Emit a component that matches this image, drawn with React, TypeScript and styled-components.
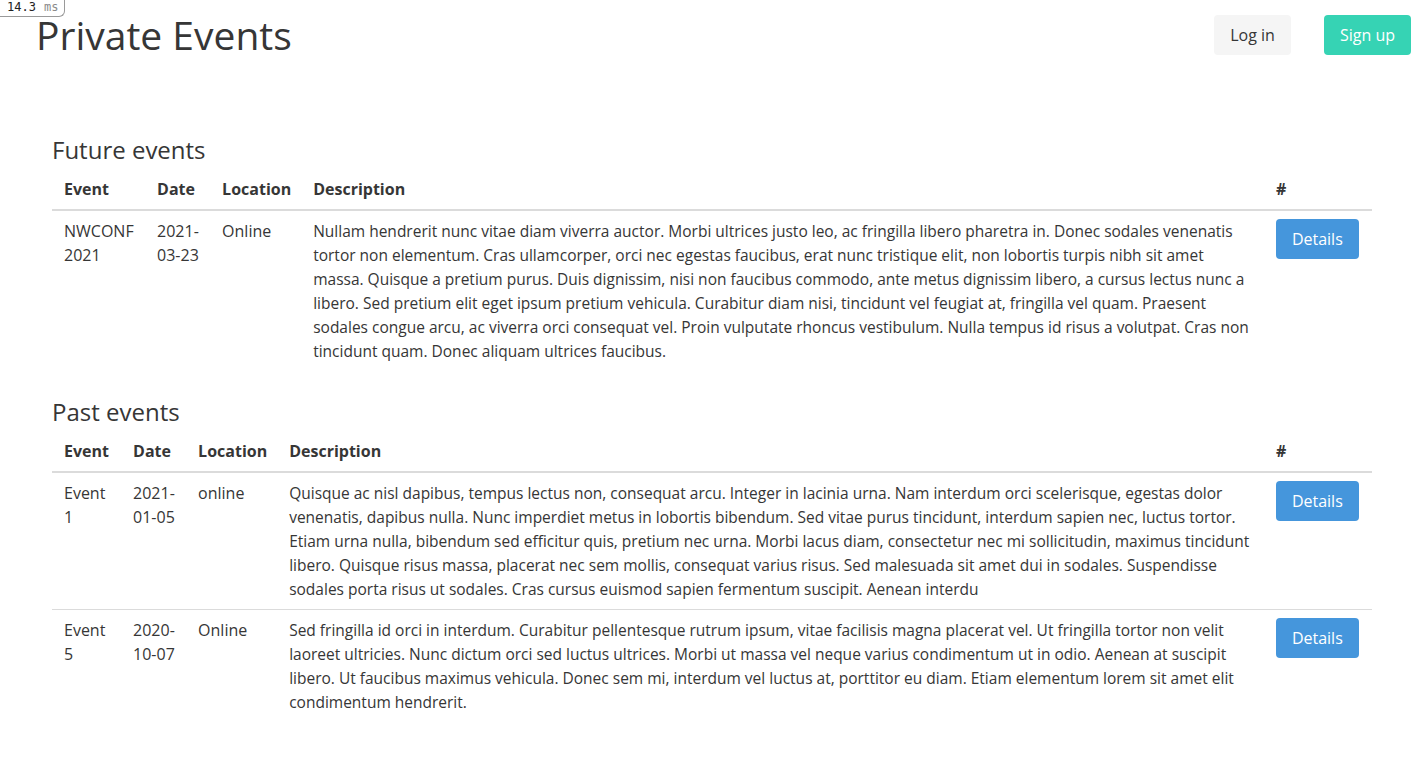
import React from 'react';
import styled, { createGlobalStyle } from 'styled-components';

interface EventRow {
  name: string[];
  date: string[];
  location: string;
  description: string[];
}

const futureEvents: EventRow[] = [
  {
    name: ['NWCONF', '2021'],
    date: ['2021-', '03-23'],
    location: 'Online',
    description: [
      'Nullam hendrerit nunc vitae diam viverra auctor. Morbi ultrices justo leo, ac fringilla libero pharetra in. Donec sodales venenatis',
      'tortor non elementum. Cras ullamcorper, orci nec egestas faucibus, erat nunc tristique elit, non lobortis turpis nibh sit amet',
      'massa. Quisque a pretium purus. Duis dignissim, nisi non faucibus commodo, ante metus dignissim libero, a cursus lectus nunc a',
      'libero. Sed pretium elit eget ipsum pretium vehicula. Curabitur diam nisi, tincidunt vel feugiat at, fringilla vel quam. Praesent',
      'sodales congue arcu, ac viverra orci consequat vel. Proin vulputate rhoncus vestibulum. Nulla tempus id risus a volutpat. Cras non',
      'tincidunt quam. Donec aliquam ultrices faucibus.',
    ],
  },
];

const pastEvents: EventRow[] = [
  {
    name: ['Event', '1'],
    date: ['2021-', '01-05'],
    location: 'online',
    description: [
      'Quisque ac nisl dapibus, tempus lectus non, consequat arcu. Integer in lacinia urna. Nam interdum orci scelerisque, egestas dolor',
      'venenatis, dapibus nulla. Nunc imperdiet metus in lobortis bibendum. Sed vitae purus tincidunt, interdum sapien nec, luctus tortor.',
      'Etiam urna nulla, bibendum sed efficitur quis, pretium nec urna. Morbi lacus diam, consectetur nec mi sollicitudin, maximus tincidunt',
      'libero. Quisque risus massa, placerat nec sem mollis, consequat varius risus. Sed malesuada sit amet dui in sodales. Suspendisse',
      'sodales porta risus ut sodales. Cras cursus euismod sapien fermentum suscipit. Aenean interdu',
    ],
  },
  {
    name: ['Event', '5'],
    date: ['2020-', '10-07'],
    location: 'Online',
    description: [
      'Sed fringilla id orci in interdum. Curabitur pellentesque rutrum ipsum, vitae facilisis magna placerat vel. Ut fringilla tortor non velit',
      'laoreet ultricies. Nunc dictum orci sed luctus ultrices. Morbi ut massa vel neque varius condimentum ut in odio. Aenean at suscipit',
      'libero. Ut faucibus maximus vehicula. Donec sem mi, interdum vel luctus at, porttitor eu diam. Etiam elementum lorem sit amet elit',
      'condimentum hendrerit.',
    ],
  },
];

const Lines = ({ lines, small }: { lines: string[]; small?: boolean }) => (
  <>
    {lines.map((l, i) => (
      <Line key={i} small={small}>{l}</Line>
    ))}
  </>
);

const EventsTable = ({ title, events, widths }: { title: string; events: EventRow[]; widths: number[] }) => (
  <Section>
    <SectionTitle>{title}</SectionTitle>
    <Table>
      <colgroup>
        {widths.map((w, i) => (
          <Col key={i} width={w} />
        ))}
      </colgroup>
      <thead>
        <tr>
          <Th>Event</Th>
          <Th>Date</Th>
          <Th>Location</Th>
          <Th>Description</Th>
          <Th>#</Th>
        </tr>
      </thead>
      <tbody>
        {events.map((e, i) => (
          <Tr key={i}>
            <Td><Lines lines={e.name} /></Td>
            <Td><Lines lines={e.date} /></Td>
            <Td>{e.location}</Td>
            <Td><Lines lines={e.description} small /></Td>
            <Td><Button variant="info">Details</Button></Td>
          </Tr>
        ))}
      </tbody>
    </Table>
  </Section>
);

const App = () => (
  <>
    <GlobalStyle />
    <Badge>
      <Timing>14.3</Timing>
      <Unit>ms</Unit>
    </Badge>
    <Navbar>
      <Brand>Private Events</Brand>
      <NavButtons>
        <Button variant="light">Log in</Button>
        <Button variant="primary">Sign up</Button>
      </NavButtons>
    </Navbar>
    <Main>
      <EventsTable title="Future events" events={futureEvents} widths={[93, 65, 91, 962, 108]} />
      <EventsTable title="Past events" events={pastEvents} widths={[69, 65, 91, 986, 108]} />
    </Main>
  </>
);

const GlobalStyle = createGlobalStyle`
  body {
    margin: 0;
    background: #fff;
    color: #4a4a4a;
    font-family: "Open Sans", "Noto Sans", sans-serif;
    font-size: 16px;
    line-height: 1.5;
  }
`;

const Badge = styled.div`
  position: absolute;
  top: 0;
  left: 0;
  z-index: 2;
  display: flex;
  gap: 8px;
  height: 16px;
  padding: 0 6px 0 7px;
  background: #fff;
  border-right: 1px solid #9a9a9a;
  border-bottom: 1px solid #9a9a9a;
  border-radius: 0 0 6px 0;
  font-family: "DejaVu Sans Mono", "Liberation Mono", monospace;
  font-size: 12px;
  line-height: 14px;
`;

const Timing = styled.span`
  color: #222;
`;

const Unit = styled.span`
  color: #8a8a8a;
`;

const Navbar = styled.header`
  display: flex;
  align-items: center;
  justify-content: space-between;
  height: 40px;
  padding: 15px 13px 0 36px;
`;

const Brand = styled.h1`
  margin: 0;
  font-size: 39px;
  font-weight: 400;
  line-height: 30px;
  color: #363636;
`;

const NavButtons = styled.div`
  display: flex;
  gap: 33px;
`;

const colors = {
  light: { bg: '#f5f5f5', fg: '#363636' },
  primary: { bg: '#36d3b4', fg: '#fff' },
  info: { bg: '#4596dc', fg: '#fff' },
};

const Button = styled.button<{ variant: keyof typeof colors }>`
  height: 40px;
  padding: 0 16px;
  border: none;
  border-radius: 4px;
  background: ${(p) => colors[p.variant].bg};
  color: ${(p) => colors[p.variant].fg};
  font-family: inherit;
  font-size: 16px;
  cursor: pointer;
  white-space: nowrap;
`;

const Main = styled.main`
  padding: 81px 52px 40px;
`;

const Section = styled.section`
  & + & {
    margin-top: 27px;
  }
`;

const SectionTitle = styled.h2`
  margin: 0 0 6px;
  font-size: 24px;
  font-weight: 400;
  line-height: 27px;
  color: #363636;
`;

const Table = styled.table`
  width: 100%;
  table-layout: fixed;
  border-collapse: collapse;
  color: #363636;
`;

const Col = styled.col<{ width: number }>`
  width: ${(p) => p.width}px;
`;

const Th = styled.th`
  padding: 8px 12px;
  text-align: left;
  font-weight: 700;
  border-bottom: 2px solid #dbdbdb;
`;

const Tr = styled.tr`
  & + & td {
    border-top: 1px solid #dbdbdb;
  }
`;

const Td = styled.td`
  padding: 8px 12px;
  vertical-align: top;
  line-height: 24px;
`;

const Line = styled.span<{ small?: boolean }>`
  display: block;
  white-space: nowrap;
  line-height: 24px;
  font-size: ${(p) => (p.small ? '15.5px' : '16px')};
`;

export default App;
